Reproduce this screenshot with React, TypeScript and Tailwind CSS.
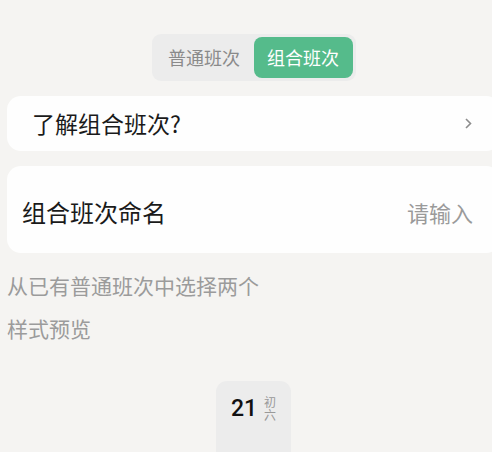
import React from "react";

const cjk = "font-['Noto_Sans_CJK_SC','Roboto',sans-serif]";

function Segment() {
  return (
    <div className="flex justify-center pt-[34px]">
      <div className="flex rounded-[9px] bg-[#ececec] p-[3px]">
        <div className="flex h-[41px] w-[99px] items-center justify-center text-[18px] text-[#8a8a8a]">
          普通班次
        </div>
        <div className="flex h-[41px] w-[99px] items-center justify-center rounded-[8px] bg-[#55bb8b] text-[18px] text-white">
          组合班次
        </div>
      </div>
    </div>
  );
}

export default function App() {
  return (
    <div className={`h-[452px] w-[492px] overflow-hidden bg-[#f5f4f2] ${cjk}`}>
      <div className="w-[507px] px-[7px]">
        <Segment />

        <div className="mt-[15px] flex h-[55px] items-center justify-between rounded-[14px] bg-[#fefefe] pl-[25px] pr-[28px]">
          <span className="text-[23px] leading-none text-[#1a1a1a]">了解组合班次?</span>
          <svg width="7" height="11" viewBox="0 0 7 11" fill="none">
            <path d="M1 1l4.5 4.5L1 10" stroke="#8c8c8c" strokeWidth="1.6" />
          </svg>
        </div>

        <div className="mt-[15px] flex h-[87px] items-center justify-between rounded-[14px] bg-[#fefefe] pl-[15px] pr-[27px] pt-[4px]">
          <span className="text-[24px] leading-none text-[#1a1a1a]">组合班次命名</span>
          <span className="text-[22px] leading-none text-[#9a9a9a]">请输入</span>
        </div>

        <div className="mt-[21px] text-[21px] leading-[22px] text-[#9b9b9b]">从已有普通班次中选择两个</div>
        <div className="mt-[21px] text-[21px] leading-[22px] text-[#9b9b9b]">样式预览</div>

        <div className="mt-[42px] flex justify-center">
          <div className="h-[80px] w-[75px] rounded-t-[11px] bg-[#ececec] pt-[14px]">
            <div className="flex items-center justify-center gap-[7px]">
              <span className="font-['Roboto',sans-serif] text-[23px] font-medium leading-none text-[#111]">21</span>
              <span className="w-[12px] break-all text-[12px] leading-[13px] text-[#999]">初六</span>
            </div>
          </div>
        </div>
      </div>
    </div>
  );
}
